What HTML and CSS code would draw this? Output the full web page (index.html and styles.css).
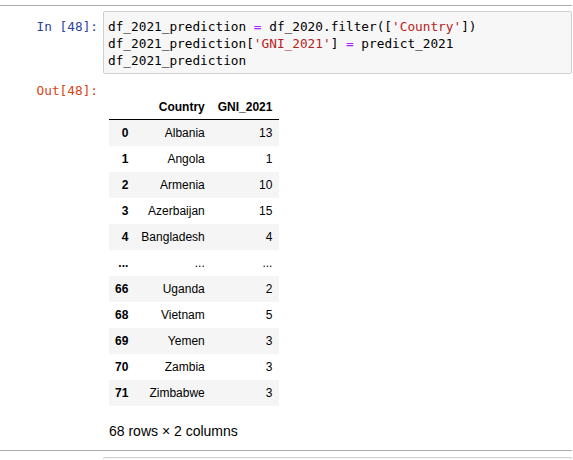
FILE: index.html
```html
<!DOCTYPE html>
<html>
<head>
<meta charset="utf-8">
<link rel="stylesheet" href="styles.css">
</head>
<body>
<div class="sep sep-top"></div>
<div class="cell">
  <div class="row input-row">
    <div class="prompt prompt-in">In&nbsp;[48]:</div>
    <div class="code"><div class="line">df_2021_prediction <span class="op">=</span> df_2020.filter([<span class="str">'Country'</span>])</div><div class="line">df_2021_prediction[<span class="str">'GNI_2021'</span>] <span class="op">=</span> predict_2021</div><div class="line">df_2021_prediction</div></div>
  </div>
  <div class="row output-row">
    <div class="prompt prompt-out">Out[48]:</div>
    <div class="out-area">
      <table class="df">
        <thead>
          <tr><th></th><th>Country</th><th>GNI_2021</th></tr>
        </thead>
        <tbody>
          <tr><th>0</th><td>Albania</td><td>13</td></tr>
          <tr><th>1</th><td>Angola</td><td>1</td></tr>
          <tr><th>2</th><td>Armenia</td><td>10</td></tr>
          <tr><th>3</th><td>Azerbaijan</td><td>15</td></tr>
          <tr><th>4</th><td>Bangladesh</td><td>4</td></tr>
          <tr><th>...</th><td>...</td><td>...</td></tr>
          <tr><th>66</th><td>Uganda</td><td>2</td></tr>
          <tr><th>68</th><td>Vietnam</td><td>5</td></tr>
          <tr><th>69</th><td>Yemen</td><td>3</td></tr>
          <tr><th>70</th><td>Zambia</td><td>3</td></tr>
          <tr><th>71</th><td>Zimbabwe</td><td>3</td></tr>
        </tbody>
      </table>
      <p class="shape">68 rows × 2 columns</p>
    </div>
  </div>
</div>
<div class="sep"></div>
<div class="row next-row">
  <div class="prompt"></div>
  <div class="code code-next"></div>
</div>
</body>
</html>
```

FILE: styles.css
```css
html, body {
  margin: 0;
  padding: 0;
  background: #ffffff;
  overflow: hidden;
}
body {
  width: 572px;
  height: 460px;
  padding-top: 5px;
  box-sizing: border-box;
}
.sep {
  height: 1px;
  background: #ababab;
}
.cell {
  padding-top: 5px;
}
.row {
  display: flex;
  align-items: flex-start;
}
.prompt {
  width: 103px;
  flex: none;
  box-sizing: border-box;
  padding-right: 5px;
  text-align: right;
  font-family: "DejaVu Sans Mono", monospace;
  font-size: 12.75px;
  line-height: 17px;
}
.prompt-in {
  color: #303f9f;
  padding-top: 7px;
}
.prompt-out {
  color: #d84315;
  padding-top: 8px;
}
.code {
  flex: 1;
  min-width: 0;
  background: #f7f7f7;
  border: 1px solid #cfcfcf;
  border-radius: 2px;
  padding: 6px 4px 4px 4px;
  font-family: "DejaVu Sans Mono", monospace;
  font-size: 12.75px;
  line-height: 17px;
  color: #000000;
  white-space: pre;
}
.op { color: #aa22ff; }
.str { color: #ba2121; }
.out-area {
  padding-top: 20px;
  padding-left: 6px;
}
.df {
  border-collapse: collapse;
  font-family: "Liberation Sans", Arial, sans-serif;
  font-size: 12px;
  line-height: 14px;
  color: #000000;
}
.df th, .df td {
  padding: 6px 6px;
  text-align: right;
  vertical-align: middle;
  white-space: nowrap;
}
.df th {
  font-weight: bold;
}
.df thead {
  border-bottom: 1px solid #000000;
}
.df thead th {
  padding-bottom: 5px;
}
.df tbody tr:nth-child(odd) {
  background: #f5f5f5;
}
.df th:nth-child(2), .df td:nth-child(2) {
  padding-left: 7px;
}
.df th:nth-child(3), .df td:nth-child(3) {
  padding-left: 7px;
  padding-right: 7px;
}
.shape {
  margin: 15px 0 9px 0;
  font-family: "Liberation Sans", Arial, sans-serif;
  font-size: 14px;
  line-height: 20px;
  color: #000000;
}
.next-row {
  padding-top: 6px;
}
.code-next {
  padding: 0;
  height: 1px;
  border-bottom: none;
  border-radius: 2px 2px 0 0;
}
```
